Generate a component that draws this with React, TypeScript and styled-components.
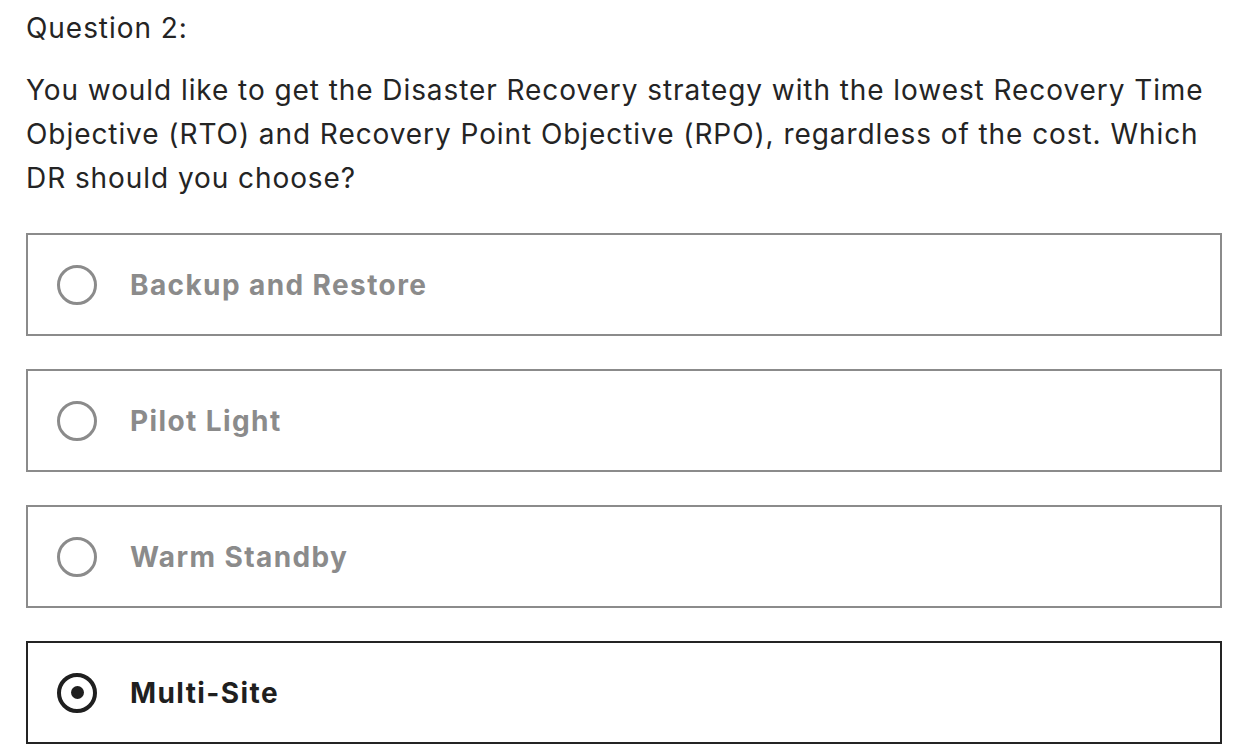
import React from 'react';
import styled, { createGlobalStyle } from 'styled-components';

const GlobalStyle = createGlobalStyle`
  html, body {
    margin: 0;
    padding: 0;
    background: #ffffff;
  }
  body {
    font-family: Inter, "Liberation Sans", Arial, sans-serif;
    color: #242424;
  }
`;

const Page = styled.div`
  padding: 6px 38px 0 26px;
  width: 1196px;
`;

const Title = styled.div`
  font-size: 28px;
  line-height: 44px;
  letter-spacing: 0.95px;
  color: #242424;
`;

const Prompt = styled.p`
  margin: 18px 0 33px;
  font-size: 28px;
  line-height: 44px;
  letter-spacing: 0.93px;
  color: #242424;
`;

const OptionList = styled.div`
  display: flex;
  flex-direction: column;
  gap: 33px;
`;

const Option = styled.label<{ $selected?: boolean }>`
  display: flex;
  align-items: center;
  gap: 33px;
  height: 103px;
  box-sizing: border-box;
  padding-left: 29px;
  border: 2px solid ${(p) => (p.$selected ? '#242424' : '#8b8b8b')};
  cursor: pointer;
`;

const Radio = styled.span<{ $selected?: boolean }>`
  width: 40px;
  height: 40px;
  box-sizing: border-box;
  border-radius: 50%;
  border: ${(p) => (p.$selected ? '4px solid #1f1f1f' : '3px solid #8b8b8b')};
  display: flex;
  align-items: center;
  justify-content: center;
  flex-shrink: 0;

  &::after {
    content: '';
    display: ${(p) => (p.$selected ? 'block' : 'none')};
    width: 13px;
    height: 13px;
    border-radius: 50%;
    background: #1f1f1f;
  }
`;

const OptionText = styled.span<{ $selected?: boolean }>`
  font-size: 28px;
  font-weight: 700;
  letter-spacing: 1.4px;
  color: ${(p) => (p.$selected ? '#1f1f1f' : '#8b8b8b')};
`;

const options = ['Backup and Restore', 'Pilot Light', 'Warm Standby', 'Multi-Site'];

export default function App() {
  const selected = 'Multi-Site';
  return (
    <>
      <GlobalStyle />
      <Page>
        <Title>Question 2:</Title>
        <Prompt>
          You would like to get the Disaster Recovery strategy with the lowest Recovery Time
          <br />
          Objective (RTO) and Recovery Point Objective (RPO), regardless of the cost. Which
          <br />
          DR should you choose?
        </Prompt>
        <OptionList>
          {options.map((o) => (
            <Option key={o} $selected={o === selected}>
              <Radio $selected={o === selected} />
              <OptionText $selected={o === selected}>{o}</OptionText>
            </Option>
          ))}
        </OptionList>
      </Page>
    </>
  );
}
